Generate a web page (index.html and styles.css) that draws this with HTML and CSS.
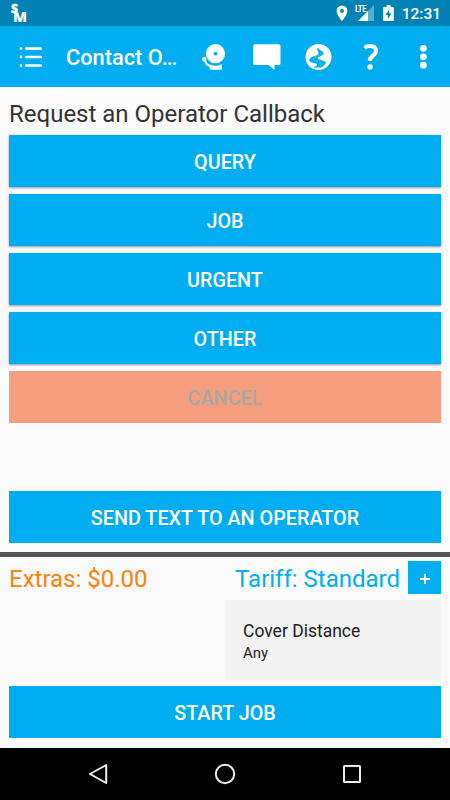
FILE: index.html
```html
<!DOCTYPE html>
<html lang="en">
<head>
    <meta charset="UTF-8">
    <meta name="viewport" content="width=device-width, initial-scale=1.0">
    <title>Contact Operator</title>
    <link rel="stylesheet" href="styles.css">
</head>
<body>

    <div class="status-bar">
        <div class="logo"><span class="logo-s">S</span><span class="logo-m">M</span></div>
        <div class="status-icons">
            <svg class="pin" width="12" height="17" viewBox="0 0 12 17">
                <path fill="#fff" fill-rule="evenodd" d="M6 .5a5.4 5.4 0 0 0-5.4 5.4C.6 10 6 16 6 16s5.4-6 5.4-10.100A5.400 5.400 0 0 0 6 .5zm0 3.400a2 2 0 1 1 0 4 2 2 0 0 1 0-4z"/>
            </svg>
            <div class="signal">
                <svg width="20" height="17" viewBox="0 0 20 17">
                    <path fill="#fff" fill-opacity=".35" d="M19 0v16H3z"/>
                    <path fill="#fff" d="M13 6v10H3z"/>
                </svg>
                <span class="lte">LTE</span>
            </div>
            <svg class="battery" width="11" height="17" viewBox="0 0 11 17">
                <path fill="#fff" d="M3.500 0h4v2H10a.8.8 0 0 1 .8.8v12.400a.8.8 0 0 1-.8.8H1a.8.8 0 0 1-.8-.8V2.800A.8.8 0 0 1 1 2h2.500z"/>
                <path fill="#0082b4" d="M6.200 4.500 2.500 10h2.400v4l3.700-5.600H6.200z"/>
            </svg>
            <span class="clock">12:31</span>
        </div>
    </div>

    <div class="app-bar">
        <svg class="menu" width="24" height="24" viewBox="0 0 24 24">
            <g fill="none" stroke="#fff" stroke-width="2.600" stroke-linecap="round">
                <path d="M7.200 3.600h14.500M7.200 12h14.500M7.200 20.500h14.500"/>
            </g>
            <g fill="#fff">
                <circle cx="2" cy="3.600" r="1.400"/>
                <circle cx="2" cy="12" r="1.400"/>
                <circle cx="2" cy="20.500" r="1.400"/>
            </g>
        </svg>
        <div class="title">Contact O…</div>
        <div class="actions">
            <!-- bell -->
            <svg width="28" height="28" viewBox="0 0 28 28">
                <circle cx="14.500" cy="10.700" r="9.600" fill="#fff"/>
                <circle cx="14.500" cy="10.700" r="1.900" fill="#00adf0"/>
                <path fill="#fff" d="M8.700 21.600q5.800 2.400 11.600 0h.7v3.900a1.300 1.300 0 0 1-1.300 1.300h-9.700a1.300 1.300 0 0 1-1.300-1.300z"/>
                <circle cx="3.200" cy="16.200" r="2.200" fill="#fff"/>
                <path fill="none" stroke="#fff" stroke-width="2" d="M3.500 16.500 6 21.500l4 2"/>
            </svg>
            <!-- message -->
            <svg width="28" height="28" viewBox="0 0 28 28">
                <path fill="#fff" d="M1.500 1.200h24.500a1.500 1.500 0 0 1 1.500 1.500v17.800a1.500 1.500 0 0 1-1.500 1.500h-4.500v5L15.500 22h-14A1.500 1.500 0 0 1 0 20.500V2.700a1.500 1.500 0 0 1 1.500-1.500z"/>
            </svg>
            <!-- road -->
            <svg width="28" height="28" viewBox="0 0 28 28">
                <circle cx="13.500" cy="14" r="13" fill="#fff"/>
                <path fill="#00adf0" d="M12 5.500h1.800c1 2 5.300 2.800 5 5-.3 1.900-6.400 3.500-6 4.900.5 1.500 8.200 1.600 8 4.600-.1 1.600-2.800 3.200-4.800 4.500H8c3-1 4.800-2.200 3.900-3.400-1.200-1.500-7.700-1-7.700-4.200 0-3.300 8.100-4 9.300-6 .7-1.500-1.200-3.200-1.500-5.400z"/>
                <path fill="none" stroke="#fff" stroke-width=".4" stroke-dasharray="1.600 1.800" d="M16.200 9.500c.5 3-7.200 4-7.500 6.800-.2 2 7 2 7.700 4.400.2 1.200-1.500 2.300-3 3.300"/>
            </svg>
            <!-- help -->
            <svg width="28" height="28" viewBox="0 0 28 28">
                <path fill="none" stroke="#fff" stroke-width="4" d="M6.500 4.800c4-2.600 11.500-2.600 11.500 3 0 5-6.200 4.600-6.200 9.900v.4"/>
                <circle cx="12.100" cy="23.900" r="2.700" fill="#fff"/>
            </svg>
            <!-- overflow -->
            <svg width="28" height="28" viewBox="0 0 28 28">
                <g fill="#fff">
                    <circle cx="13.400" cy="5.300" r="3.400"/>
                    <circle cx="13.400" cy="13.800" r="3.400"/>
                    <circle cx="13.400" cy="22.200" r="3.400"/>
                </g>
            </svg>
        </div>
    </div>

    <div class="content">
        <h1>Request an Operator Callback</h1>
        <div class="button-list">
            <button class="raised">QUERY</button>
            <button class="raised">JOB</button>
            <button class="raised">URGENT</button>
            <button class="raised">OTHER</button>
            <button class="cancel" disabled>CANCEL</button>
        </div>
        <button class="send">SEND TEXT TO AN OPERATOR</button>
    </div>

    <div class="job-panel">
        <div class="fare-row">
            <span class="extras">Extras: $0.00</span>
            <span class="tariff">Tariff: Standard</span>
            <button class="add" aria-label="Add">
                <svg width="12" height="12" viewBox="0 0 12 12">
                    <path fill="none" stroke="#fff" stroke-width="2" d="M6 1v10M1 6h10"/>
                </svg>
            </button>
        </div>
        <div class="cover">
            <div class="cover-title">Cover Distance</div>
            <div class="cover-value">Any</div>
        </div>
        <button>START JOB</button>
    </div>

    <div class="nav-bar">
        <svg width="24" height="24" viewBox="0 0 24 24">
            <path fill="none" stroke="#eee" stroke-width="2" stroke-linejoin="round" d="M20.200 3v18L4 12z"/>
        </svg>
        <svg width="24" height="24" viewBox="0 0 24 24">
            <circle cx="12" cy="12" r="9.200" fill="none" stroke="#eee" stroke-width="2"/>
        </svg>
        <svg width="24" height="24" viewBox="0 0 24 24">
            <rect x="4" y="4" width="16" height="16" rx=".5" fill="none" stroke="#eee" stroke-width="2"/>
        </svg>
    </div>

</body>
</html>
```

FILE: styles.css
```css
* {
    box-sizing: border-box;
}
body {
    font-family: Roboto, 'Liberation Sans', sans-serif;
    background-color: #fafafa;
    color: #333;
    margin: 0;
    width: 450px;
    height: 800px;
    display: flex;
    flex-direction: column;
    overflow: hidden;
}
svg {
    display: block;
    flex: none;
}
.status-bar {
    height: 26px;
    padding: 0 9px 0 11px;
    background-color: #0082b4;
    color: #fff;
    display: flex;
    justify-content: space-between;
    align-items: flex-start;
}
.logo {
    display: flex;
    padding-top: 4px;
    font-family: 'Open Sans', sans-serif;
    font-weight: 800;
    line-height: 10px;
}
.logo-s {
    font-size: 12px;
    -webkit-text-stroke: 0.4px #fff;
}
.logo-m {
    font-size: 14.5px;
    margin: 8px 0 0 -5px;
}
.status-icons {
    display: flex;
    align-items: flex-start;
    padding-top: 5px;
}
.signal {
    position: relative;
    margin: 0 8px 0 7px;
}
.lte {
    position: absolute;
    left: 0;
    top: 0;
    font-size: 9px;
    font-weight: bold;
    line-height: 8px;
    letter-spacing: -0.5px;
    transform: scaleX(0.85);
    transform-origin: left;
}
.clock {
    margin-left: 8px;
    font-size: 15.5px;
    font-weight: 500;
    line-height: 18px;
}
.app-bar {
    height: 61px;
    padding: 0 12px 0 19px;
    background-color: #00adf0;
    display: flex;
    align-items: center;
}
.title {
    width: 113px;
    padding-top: 2px;
    margin-left: 23px;
    color: #fff;
    font-size: 21.8px;
    font-weight: 500;
    white-space: nowrap;
}
.actions {
    display: flex;
    gap: 24.3px;
    margin-left: 22px;
}
.content {
    height: 465px;
    padding: 11px 9px 9px;
    display: flex;
    flex-direction: column;
}
h1 {
    margin: 0 0 5px;
    font-size: 24px;
    font-weight: 400;
    line-height: 32px;
    white-space: nowrap;
}
.button-list {
    display: flex;
    flex-direction: column;
    gap: 7px;
}
button {
    flex: none;
    width: 100%;
    height: 52px;
    padding: 2px 0 0;
    border: none;
    background-color: #00adf0;
    color: #fff;
    font-family: inherit;
    font-size: 19.8px;
    font-weight: 500;
}
.raised {
    box-shadow: 0 1px 2px rgba(0, 0, 0, 0.4);
}
.cancel {
    background-color: #f49e7d;
    color: #a7a7a7;
}
.send {
    margin-top: auto;
}
.job-panel {
    height: 196px;
    padding: 4px 9px 9px;
    border-top: 5px solid #555;
    display: flex;
    flex-direction: column;
}
.fare-row {
    display: flex;
    align-items: center;
    height: 33px;
    font-size: 24px;
    white-space: nowrap;
}
.extras,
.tariff {
    padding-top: 3px;
}
.extras {
    color: #ff7f0e;
}
.tariff {
    margin-left: auto;
    color: #00adf0;
}
.add {
    width: 33px;
    height: 33px;
    margin-left: 8px;
    display: flex;
    justify-content: center;
    align-items: center;
}
.cover {
    width: 216px;
    height: 80px;
    margin: 6px 0 6px auto;
    padding: 20px 18px;
    background-color: #f2f2f2;
    color: #212121;
}
.cover-title {
    font-size: 17.5px;
    line-height: 22px;
}
.cover-value {
    font-size: 15px;
    line-height: 22px;
}
.nav-bar {
    flex: 1;
    padding: 0 86px;
    background-color: #000;
    display: flex;
    justify-content: space-between;
    align-items: center;
}
```
